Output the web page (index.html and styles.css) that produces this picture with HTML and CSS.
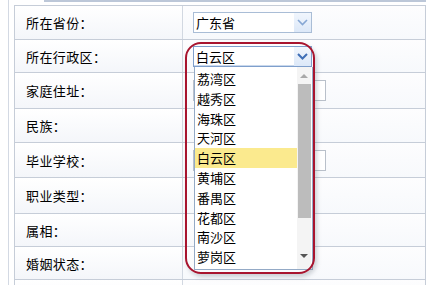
FILE: index.html
```html
<!DOCTYPE html>
<html lang="zh">
<head>
<meta charset="utf-8">
<link rel="stylesheet" href="styles.css">
</head>
<body>
<div class="page">
  <div class="topline"></div>
  <div class="sideline"></div>
  <div class="form">
    <div class="row h34"><div class="label">所在省份：</div><div class="field"><div class="select"><span class="sel-text">广东省</span><span class="sel-btn"><svg width="11" height="7" viewBox="0 0 11 7"><path d="M1 1 L5.5 5.5 L10 1" fill="none" stroke="#86a7d4" stroke-width="1.6"/></svg></span></div></div></div>
    <div class="row h33"><div class="label">所在行政区：</div><div class="field"><div class="select active"><span class="sel-text">白云区</span><span class="sel-btn"><svg width="11" height="7" viewBox="0 0 11 7"><path d="M1 1 L5.5 5.5 L10 1" fill="none" stroke="#3f6fb6" stroke-width="2"/></svg></span></div></div></div>
    <div class="row h36"><div class="label">家庭住址：</div><div class="field"><div class="input"></div></div></div>
    <div class="row h34"><div class="label">民族：</div><div class="field"></div></div>
    <div class="row h35"><div class="label">毕业学校：</div><div class="field"><div class="input"></div></div></div>
    <div class="row h36"><div class="label">职业类型：</div><div class="field"></div></div>
    <div class="row h33"><div class="label">属相：</div><div class="field"></div></div>
    <div class="row h33"><div class="label">婚姻状态：</div><div class="field"></div></div>
    <div class="row h33"><div class="label"></div><div class="field"></div></div>
  </div>
  <div class="dropdown">
    <ul class="options">
      <li>荔湾区</li>
      <li>越秀区</li>
      <li>海珠区</li>
      <li>天河区</li>
      <li class="hl">白云区</li>
      <li>黄埔区</li>
      <li>番禺区</li>
      <li>花都区</li>
      <li>南沙区</li>
      <li>萝岗区</li>
      <li>从化区</li>
    </ul>
    <div class="scrollbar">
      <span class="arr up"></span>
      <span class="thumb"></span>
      <span class="arr down"></span>
    </div>
  </div>
  <div class="ring"></div>
</div>
</body>
</html>
```
FILE: styles.css
```css
html, body {
  margin: 0;
  padding: 0;
  background: #fff;
}
body {
  font-family: "Noto Sans CJK SC", "Noto Sans", sans-serif;
  font-size: 13px;
  color: #000;
}
.page {
  position: relative;
  width: 427px;
  height: 285px;
  overflow: hidden;
}
.topline {
  position: absolute;
  left: 44px;
  top: 0;
  width: 382px;
  height: 2px;
  background: #bcc7d8;
}
.sideline {
  position: absolute;
  left: 8px;
  top: 0;
  width: 1px;
  height: 285px;
  background: #d3d9e3;
}
.form {
  position: absolute;
  left: 14px;
  top: 5px;
  width: 410px;
  border: 1px solid #c6cdd8;
  border-bottom: none;
  display: flex;
  flex-direction: column;
}
.row {
  display: grid;
  grid-template-columns: 168px 1fr;
  border-bottom: 1px solid #c6cdd8;
  box-sizing: border-box;
}
.h33 { height: 33px; }
.h34 { height: 34px; }
.h35 { height: 35px; }
.h36 { height: 36px; }
.label {
  display: flex;
  align-items: center;
  padding-left: 11px;
  border-right: 1px solid #d2d8e1;
  background: linear-gradient(#ffffff, #f4f6fa);
  letter-spacing: 0.4px;
}
.field {
  display: flex;
  align-items: center;
  padding-left: 10px;
  background: linear-gradient(#fdfdfe, #f7f9fc);
}
.select {
  width: 119px;
  height: 21px;
  box-sizing: border-box;
  border: 1px solid #a9bdd6;
  background: #fff;
  display: flex;
  align-items: stretch;
}
.select.active {
  border-color: #7f9fcc;
  box-shadow: inset 0 -1px 0 #c9d8ec;
}
.sel-text {
  flex: 1;
  padding-left: 2px;
  line-height: 19px;
}
.sel-btn {
  width: 17px;
  background: linear-gradient(#f1f6fd, #dce8f8);
  display: flex;
  align-items: center;
  justify-content: center;
}
.input {
  width: 133px;
  height: 21px;
  box-sizing: border-box;
  border: 1px solid #b9c0ca;
  background: #fff;
}
.dropdown {
  position: absolute;
  left: 194px;
  top: 67px;
  width: 119px;
  height: 203px;
  box-sizing: border-box;
  border: 1px solid #94aac6;
  border-top: none;
  background: #fff;
  display: flex;
  overflow: hidden;
}
.options {
  list-style: none;
  margin: 0;
  padding: 2px 0 0 0;
  flex: 1;
}
.options li {
  height: 19.8px;
  line-height: 19.8px;
  padding-left: 2px;
  white-space: nowrap;
}
.options li.hl {
  background: #fbea8e;
}
.scrollbar {
  width: 14px;
  background: #f4f4f4;
  display: flex;
  flex-direction: column;
  align-items: center;
  margin-right: 1px;
}
.arr {
  width: 0;
  height: 0;
  border-left: 4px solid transparent;
  border-right: 4px solid transparent;
}
.arr.up {
  margin-top: 7px;
  border-bottom: 4px solid #a8a8a8;
}
.thumb {
  margin-top: 6px;
  width: 13px;
  height: 134px;
  background: #bcbcbc;
}
.arr.down {
  margin-top: auto;
  margin-bottom: 11px;
  border-top: 4px solid #555;
}
.ring {
  position: absolute;
  left: 185px;
  top: 42px;
  width: 130px;
  height: 232px;
  box-sizing: border-box;
  border: 2px solid #a8142e;
  border-radius: 16px;
  box-shadow: 2px 3px 4px rgba(120, 130, 140, 0.35);
}
```
